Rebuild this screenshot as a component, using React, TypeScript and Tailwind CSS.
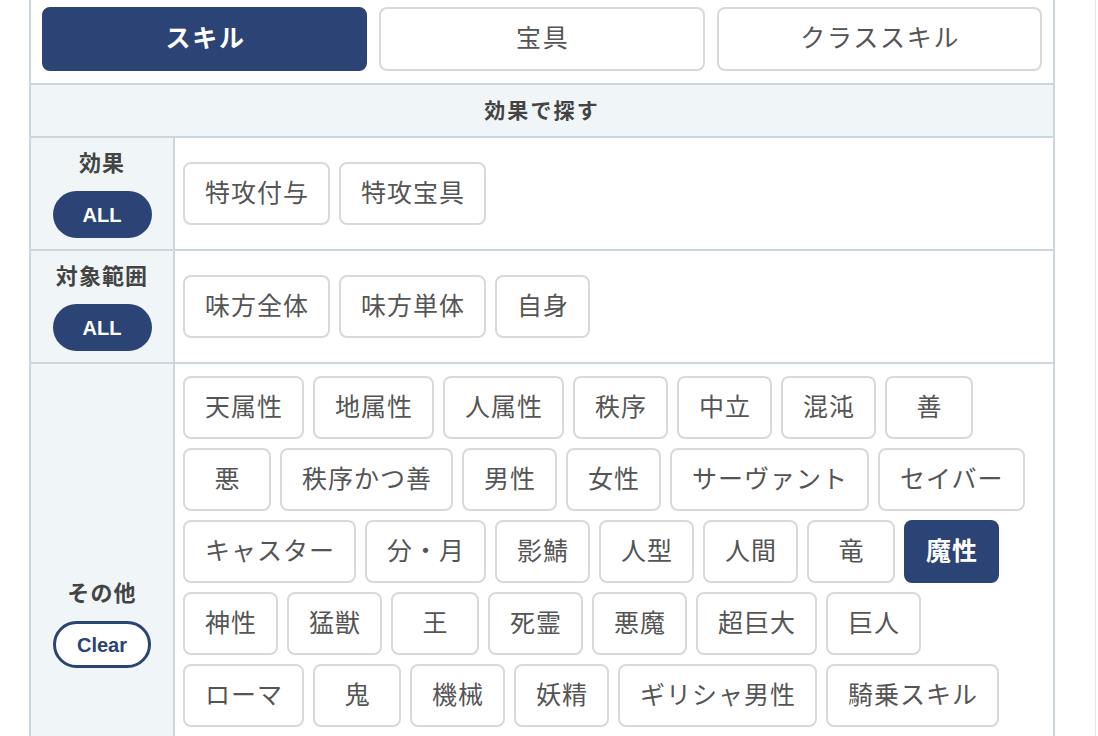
import { useState } from 'react'

const NAVY = 'bg-[#2b4475]'

const effectTags = ['特攻付与', '特攻宝具']
const rangeTags = ['味方全体', '味方単体', '自身']
const otherTags = [
  '天属性', '地属性', '人属性', '秩序', '中立', '混沌', '善',
  '悪', '秩序かつ善', '男性', '女性', 'サーヴァント', 'セイバー',
  'キャスター', '分・月', '影鯖', '人型', '人間', '竜', '魔性',
  '神性', '猛獣', '王', '死霊', '悪魔', '超巨大', '巨人',
  'ローマ', '鬼', '機械', '妖精', 'ギリシャ男性', '騎乗スキル',
  'ケルト', 'ランサー', 'アルトリア顔', 'ライダー', 'エクストラ',
  'アーチャー', 'アサシン', 'バーサーカー', 'ルーラー', '神秘',
]

function Chip({ label, active, onClick }: { label: string; active?: boolean; onClick?: () => void }) {
  return (
    <button
      onClick={onClick}
      className={`h-[63px] min-w-[88px] px-[20px] flex items-center justify-center rounded-lg border-2 text-[25px] tracking-[1px] leading-none ${
        active
          ? `${NAVY} border-[#2b4475] text-white font-bold`
          : 'bg-white border-[#d9d9d9] text-[#555]'
      }`}
    >
      <span className="-mr-[1px]">{label}</span>
    </button>
  )
}

function Row({
  title,
  tags,
  selected,
  onToggle,
  clear,
  last,
}: {
  title: string
  tags: string[]
  selected: string[]
  onToggle: (t: string) => void
  clear?: boolean
  last?: boolean
}) {
  return (
    <div className={`flex ${last ? '' : 'border-b-2 border-[#cbd7df]'}`}>
      <div className="w-[144px] shrink-0 bg-[#f0f6f7] border-r-2 border-[#cbd7df] flex flex-col items-center justify-center py-[11px]">
        <div className="text-[22px] leading-[30px] font-bold text-[#444] tracking-[0.05em]">{title}</div>
        {clear ? (
          <button className="mt-3 w-[98px] h-[47px] rounded-full border-[3px] border-[#2b4475] bg-white text-[#2b4475] text-[20px] font-bold">
            Clear
          </button>
        ) : (
          <button className={`mt-3 w-[99px] h-[47px] rounded-full ${NAVY} text-white text-[20px] font-bold`}>
            ALL
          </button>
        )}
      </div>
      <div className="flex-1 px-2 py-3 flex items-center">
        <div className="flex flex-wrap gap-[9px]">
          {tags.map((t) => (
            <Chip key={t} label={t} active={selected.includes(t)} onClick={() => onToggle(t)} />
          ))}
        </div>
      </div>
    </div>
  )
}

export default function App() {
  const [tab, setTab] = useState(0)
  const [selected, setSelected] = useState<string[]>(['魔性'])
  const toggle = (t: string) =>
    setSelected((s) => (s.includes(t) ? s.filter((x) => x !== t) : [...s, t]))

  const tabs = ['スキル', '宝具', 'クラススキル']

  return (
    <div
      className="w-[1096px] h-[736px] overflow-hidden bg-white border-r border-[#e4e9ed]"
      style={{ fontFamily: '"Liberation Sans", "Noto Sans CJK JP", sans-serif' }}
    >
      <div className="ml-[29px] w-[1026px] border-x-2 border-[#cbd7df]">
        {/* タブ */}
        <div className="grid grid-cols-3 gap-3 px-[11px] pt-[7px] pb-3 border-b-2 border-[#cbd7df]">
          {tabs.map((t, i) => (
            <button
              key={t}
              onClick={() => setTab(i)}
              className={`h-[64px] rounded-lg border-2 text-[25px] tracking-[0.07em] ${
                tab === i
                  ? `${NAVY} border-[#2b4475] text-white font-bold`
                  : 'bg-white border-[#d9d9d9] text-[#555]'
              }`}
            >
              <span className="-mr-[0.07em]">{t}</span>
            </button>
          ))}
        </div>

        {/* 見出し */}
        <div className="h-[53px] flex items-center justify-center bg-[#f0f6f7] border-b-2 border-[#cbd7df] text-[21px] font-bold text-[#444] tracking-[0.1em]">
          効果で探す
        </div>

        <Row title="効果" tags={effectTags} selected={selected} onToggle={toggle} />
        <Row title="対象範囲" tags={rangeTags} selected={selected} onToggle={toggle} />
        <Row title="その他" tags={otherTags} selected={selected} onToggle={toggle} clear last />
      </div>
    </div>
  )
}
